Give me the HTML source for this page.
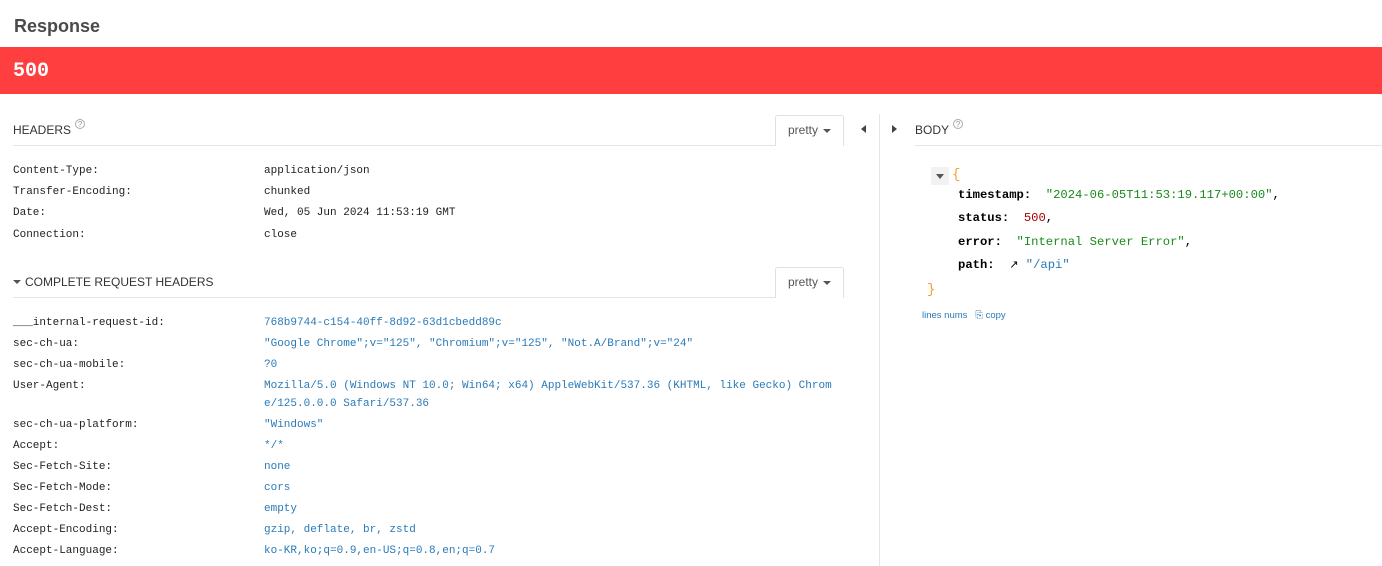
<!DOCTYPE html>
<html><head><meta charset="utf-8"><style>
*{margin:0;padding:0;box-sizing:border-box}
body{width:1382px;height:566px;overflow:hidden;background:#fff;font-family:"Liberation Sans",sans-serif;position:relative}
.abs{position:absolute}
h1{position:absolute;left:14px;top:16px;font-size:18px;font-weight:bold;color:#4a4a4a}
.bar{position:absolute;left:0;top:47px;width:1382px;height:47px;background:#ff3f3f}
.bar span{position:absolute;left:13px;top:13px;font-family:"Liberation Mono",monospace;font-weight:bold;font-size:20px;color:#fff}
.sec{font-size:12px;color:#333;}
.q{display:inline-block;width:10px;height:10px;border:1px solid #aaa;border-radius:50%;font-size:8px;color:#999;text-align:center;line-height:9px;vertical-align:top;margin-left:4px;margin-top:-4px}
.line{height:1px;background:#e5e5e5}
.btn{position:absolute;width:69px;height:31px;border:1px solid #e0e0e0;border-bottom:none;border-radius:3px 3px 0 0;font-size:12px;color:#555;padding:7px 0 0 12px;background:#fff}
.car{display:inline-block;width:0;height:0;border-left:4px solid transparent;border-right:4px solid transparent;border-top:4px solid #555;vertical-align:middle;margin-left:5px}
.row{position:absolute;left:13px;font-family:"Liberation Mono",monospace;font-size:11px;color:#222;line-height:18px}
.row b{font-weight:normal;position:absolute;left:251px;white-space:nowrap}
.bl b{color:#2a7ab8}
.j{position:absolute;font-family:"Liberation Mono",monospace;font-size:12.2px;color:#000;white-space:pre}
.g{color:#1a8a1a}
</style></head><body>
<h1>Response</h1>
<div class="bar"><span>500</span></div>

<div class="abs sec" style="left:13px;top:123px">HEADERS<span class="q">?</span></div>
<div class="abs line" style="left:13px;top:145px;width:831px"></div>
<div class="btn" style="left:775px;top:115px">pretty<span class="car"></span></div>
<div class="row" style="top:162px">Content-Type:<b>application/json</b></div>
<div class="row" style="top:183px">Transfer-Encoding:<b>chunked</b></div>
<div class="row" style="top:204px">Date:<b>Wed, 05 Jun 2024 11:53:19 GMT</b></div>
<div class="row" style="top:226px">Connection:<b>close</b></div>

<div class="abs sec" style="left:13px;top:275px"><span class="car" style="margin:0 4px 2px 0"></span>COMPLETE REQUEST HEADERS</div>
<div class="abs line" style="left:13px;top:297px;width:831px"></div>
<div class="btn" style="left:775px;top:267px">pretty<span class="car"></span></div>
<div class="bl">
<div class="row" style="top:314px">___internal-request-id:<b>768b9744-c154-40ff-8d92-63d1cbedd89c</b></div>
<div class="row" style="top:335px">sec-ch-ua:<b>"Google Chrome";v="125", "Chromium";v="125", "Not.A/Brand";v="24"</b></div>
<div class="row" style="top:356px">sec-ch-ua-mobile:<b>?0</b></div>
<div class="row" style="top:377px">User-Agent:<b>Mozilla/5.0 (Windows NT 10.0; Win64; x64) AppleWebKit/537.36 (KHTML, like Gecko) Chrom<br>e/125.0.0.0 Safari/537.36</b></div>
<div class="row" style="top:416px">sec-ch-ua-platform:<b>"Windows"</b></div>
<div class="row" style="top:437px">Accept:<b>*/*</b></div>
<div class="row" style="top:458px">Sec-Fetch-Site:<b>none</b></div>
<div class="row" style="top:479px">Sec-Fetch-Mode:<b>cors</b></div>
<div class="row" style="top:500px">Sec-Fetch-Dest:<b>empty</b></div>
<div class="row" style="top:521px">Accept-Encoding:<b>gzip, deflate, br, zstd</b></div>
<div class="row" style="top:542px">Accept-Language:<b>ko-KR,ko;q=0.9,en-US;q=0.8,en;q=0.7</b></div>
</div>

<div class="abs" style="left:861px;top:125px;width:0;height:0;border-top:4px solid transparent;border-bottom:4px solid transparent;border-right:5px solid #444"></div>
<div class="abs" style="left:892px;top:125px;width:0;height:0;border-top:4px solid transparent;border-bottom:4px solid transparent;border-left:5px solid #444"></div>
<div class="abs" style="left:879px;top:114px;width:1px;height:452px;background:#e5e5e5"></div>
<div class="abs sec" style="left:915px;top:123px">BODY<span class="q">?</span></div>
<div class="abs line" style="left:915px;top:145px;width:467px"></div>

<div class="abs" style="left:931px;top:167px;width:18px;height:18px;background:#f2f2f2"></div>
<div class="abs" style="left:936px;top:174px;width:0;height:0;border-left:4px solid transparent;border-right:4px solid transparent;border-top:5px solid #555"></div>
<div class="j" style="left:952px;top:167px;color:#f0a030;font-size:14px">{</div>
<div class="j" style="left:958px;top:188px"><b>timestamp:</b>  <span class="g">"2024-06-05T11:53:19.117+00:00"</span>,</div>
<div class="j" style="left:958px;top:211px"><b>status:</b>  <span style="color:#a00">500</span>,</div>
<div class="j" style="left:958px;top:235px"><b>error:</b>  <span class="g">"Internal Server Error"</span>,</div>
<div class="j" style="left:958px;top:258px"><b>path:</b>  <span style="font-family:'DejaVu Sans';font-size:11px">&#x2197;</span> <span style="color:#2a7ab8">"/api"</span></div>
<div class="j" style="left:927px;top:282px;color:#f0a030;font-size:14px">}</div>
<div class="abs" style="left:922px;top:310px;font-size:9.5px;color:#2a7ab8">lines nums &nbsp;&nbsp;&#x2398; copy</div>
</body></html>
